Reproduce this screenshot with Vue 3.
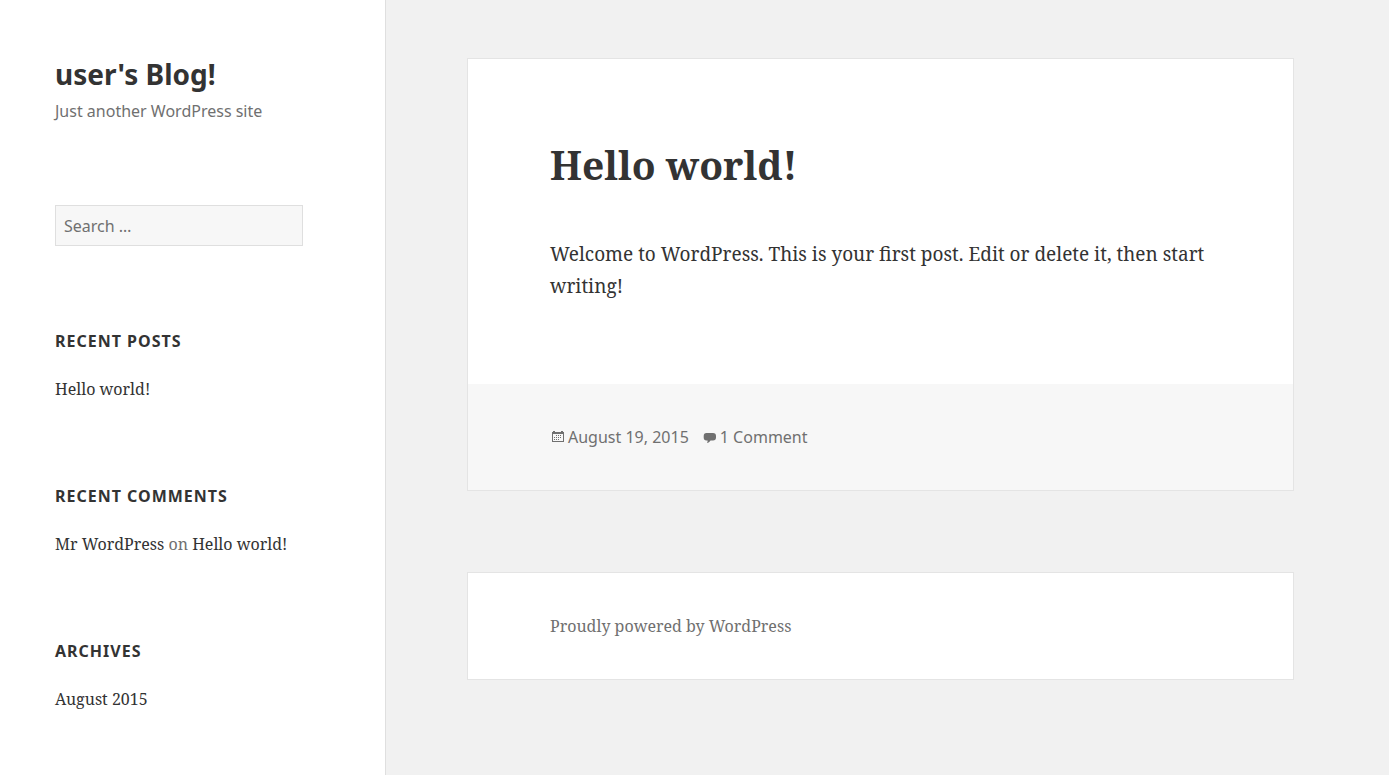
<script setup>
import { ref } from 'vue'

const search = ref('')

const recentPosts = ref([
  { id: 1, title: 'Hello world!' }
])

const recentComments = ref([
  { id: 1, author: 'Mr WordPress', post: 'Hello world!' }
])

const archives = ref(['August 2015'])
</script>

<template>
  <div class="site">
    <aside class="sidebar">
      <header class="branding">
        <h1 class="site-title"><a href="#">user's Blog!</a></h1>
        <p class="site-description">Just another WordPress site</p>
      </header>

      <form class="search-form" role="search" @submit.prevent>
        <input v-model="search" type="search" placeholder="Search …" aria-label="Search for:">
      </form>

      <div class="widgets">
        <section class="widget">
          <h2>Recent Posts</h2>
          <ul>
            <li v-for="post in recentPosts" :key="post.id">
              <a href="#">{{ post.title }}</a>
            </li>
          </ul>
        </section>

        <section class="widget">
          <h2>Recent Comments</h2>
          <ul>
            <li v-for="comment in recentComments" :key="comment.id">
              <a href="#">{{ comment.author }}</a> on <a href="#">{{ comment.post }}</a>
            </li>
          </ul>
        </section>

        <section class="widget">
          <h2>Archives</h2>
          <ul>
            <li v-for="month in archives" :key="month">
              <a href="#">{{ month }}</a>
            </li>
          </ul>
        </section>
      </div>
    </aside>

    <div class="content">
      <main>
        <article class="post">
          <div class="post-body">
            <h2><a href="#">Hello world!</a></h2>
            <p>Welcome to WordPress. This is your first post. Edit or delete it, then start writing!</p>
          </div>

          <footer class="post-meta">
            <a href="#" class="meta-link">
              <svg width="16" height="16" viewBox="0 0 16 16" aria-hidden="true">
                <path fill="#707070" fill-rule="evenodd" d="M2 3h1V2h2v1h6V2h2v1h1v10H2zM3 5v7h10V5z" />
                <path fill="#707070" d="M6 6h1v1H6zM8 6h1v1H8zM10 6h1v1h-1zM4 8h1v1H4zM6 8h1v1H6zM8 8h1v1H8zM10 8h1v1h-1zM4 10h1v1H4zM6 10h1v1H6zM8 10h1v1H8z" />
              </svg>
              August 19, 2015
            </a>
            <a href="#" class="meta-link">
              <svg width="16" height="16" viewBox="0 0 16 16" aria-hidden="true">
                <path fill="#707070" d="M5 4h6a3 3 0 0 1 3 3v1.500a3 3 0 0 1-3 3H8.500C7.500 13 6.500 13.700 5 14c.500-.700.700-1.500.600-2.500H5a3 3 0 0 1-3.300-3V7A3 3 0 0 1 5 4z" />
              </svg>
              1 Comment
            </a>
          </footer>
        </article>
      </main>

      <footer class="site-footer">
        <a href="#">Proudly powered by WordPress</a>
      </footer>
    </div>
  </div>
</template>

<style>
body {
  margin: 0;
  background: #f1f1f1;
}
</style>

<style scoped>
* {
  box-sizing: border-box;
}

.site {
  display: flex;
  min-height: 100vh;
  font-family: "Noto Serif", "Droid Serif", "Liberation Serif", serif;
  font-size: 16px;
  line-height: 26px;
  color: #707070;
}

h1,
h2,
p,
ul {
  margin: 0;
  padding: 0;
}

ul {
  list-style: none;
}

a {
  color: #333;
  text-decoration: none;
}

.sidebar {
  flex: none;
  width: 386px;
  padding: 58px 82px 58px 55px;
  background: #fff;
  border-right: 1px solid #dfdfdf;
}

.branding,
.site-title,
.search-form,
.widget h2,
.post-meta {
  font-family: "Noto Sans", "Open Sans", sans-serif;
}

.site-title {
  font-size: 28px;
  line-height: 32px;
}

.site-description {
  margin-top: 8px;
}

.search-form {
  margin-top: 81px;
}

.search-form input {
  display: block;
  width: 100%;
  height: 41px;
  padding: 0 8px;
  border: 1px solid #dfdfdf;
  border-radius: 0;
  background: #f7f7f7;
  color: #707070;
  font: inherit;
  appearance: none;
}

.search-form input::placeholder {
  color: #707070;
  opacity: 1;
}

.widgets {
  display: flex;
  flex-direction: column;
  gap: 81px;
  margin-top: 82px;
}

.widget h2 {
  margin-bottom: 22px;
  font-size: 16px;
  line-height: 26px;
  letter-spacing: 1px;
  text-transform: uppercase;
  color: #333;
}

.content {
  flex: 1;
  padding: 58px 95px 95px 81px;
}

.post,
.site-footer {
  background: #fff;
  border: 1px solid #e4e4e4;
}

.post-body {
  padding: 82px;
  color: #333;
}

.post-body h2 {
  margin-bottom: 49px;
  font-size: 39px;
  line-height: 48px;
}

.post-body p {
  font-size: 19px;
  line-height: 32px;
}

.post-meta {
  display: flex;
  gap: 13px;
  padding: 40px 82px;
  background: #f7f7f7;
}

.meta-link {
  display: flex;
  align-items: center;
  gap: 2px;
  color: #707070;
}

.site-footer {
  margin-top: 81px;
  padding: 40px 82px;
}

.site-footer a {
  color: #707070;
}
</style>
